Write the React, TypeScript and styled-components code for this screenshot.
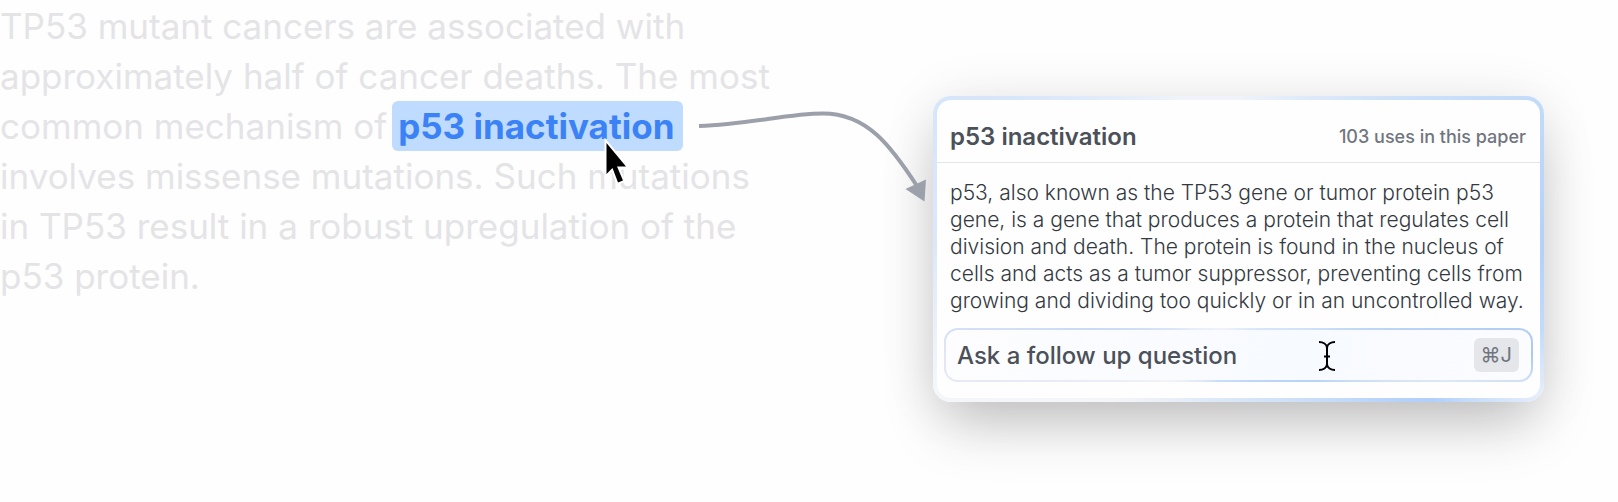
import React from "react";
import styled, { createGlobalStyle } from "styled-components";

const GlobalStyle = createGlobalStyle`
  *, *::before, *::after { box-sizing: border-box; }
  body {
    margin: 0;
    background: #fefefe;
    font-family: Inter, "Liberation Sans", sans-serif;
  }
`;

const Page = styled.main`
  display: grid;
  grid-template-columns: minmax(0, 784fr) minmax(0, 611fr);
  column-gap: 149px;
  align-items: start;
  padding-right: 74px;
  min-height: 100vh;
`;

const Excerpt = styled.p`
  margin: 0;
  padding-top: 1px;
  font-size: 35px;
  line-height: 50px;
  font-weight: 400;
  color: #e4e4e7;
`;

const Term = styled.mark`
  position: relative;
  display: inline-block;
  margin: 0 -5px;
  padding: 0 9px 0 6px;
  border-radius: 6px;
  background: #bfdbfe;
  color: #3b82f6;
  font-weight: 700;
`;

const Connector = styled.svg`
  position: absolute;
  left: calc(100% + 16px);
  top: 3px;
  overflow: visible;
  pointer-events: none;
`;

const Pointer = styled.svg`
  position: absolute;
  right: 56px;
  top: 38px;
  overflow: visible;
  pointer-events: none;
`;

const Card = styled.section`
  margin: 96px 0;
  border: 4px solid transparent;
  border-radius: 18px;
  background:
    linear-gradient(#fefefe, #fefefe) padding-box,
    conic-gradient(from 0deg, #f0f4fa 0deg, #c8defa 55deg, #b3d1f9 90deg, #c3dbfb 105deg, #e6eefa 116deg, #b0cffb 128deg, #c8dcf8 150deg, #dde9f8 190deg, #f4f5f7 220deg, #f4f6fa 245deg, #dce8fa 270deg, #d6e5fa 300deg, #f0f4fa 340deg, #f0f4fa 360deg) border-box;
  box-shadow: 0 30px 60px -10px rgba(0, 0, 0, 0.22), 0 4px 56px rgba(0, 0, 0, 0.09);
  color: #4b5059;
`;

const CardHeader = styled.header`
  display: flex;
  align-items: center;
  justify-content: space-between;
  height: 63px;
  padding: 11px 14px 0 13px;
  border-bottom: 1px solid #e4e5e8;
`;

const Title = styled.h2`
  margin: 0;
  font-size: 24px;
  line-height: 32px;
  font-weight: 600;
`;

const UseCount = styled.span`
  font-size: 18px;
  line-height: 32px;
  font-weight: 500;
  color: #71757e;
`;

const Definition = styled.p`
  margin: 0;
  padding: 16px 13px 14px;
  font-size: 21px;
  line-height: 27px;
  font-weight: 300;
  color: #343941;
`;

const Ask = styled.form`
  position: relative;
  display: flex;
  align-items: center;
  height: 54px;
  margin: 0 7px 16px;
  padding: 0 12px 0 11px;
  border: 2px solid transparent;
  border-radius: 14px;
  background:
    linear-gradient(100deg, #fdfdff, #f7faff 60%, #fbfcff) padding-box,
    conic-gradient(#e3ecf9 0deg, #d0e1f9 70deg, #a9c8f4 90deg, #dde8f8 97deg, #b9d3f7 108deg, #c0d8f9 170deg, #cadef9 220deg, #f2f3f8 250deg, #e2e6f5 270deg, #c9daf6 280deg, #e8eef8 300deg, #f0f3f9 330deg, #e3ecf9 360deg) border-box;
`;

const AskInput = styled.input`
  flex: 1;
  min-width: 0;
  padding: 1px 0 0;
  border: 0;
  outline: 0;
  background: transparent;
  font: inherit;
  font-size: 24px;
  line-height: 32px;
  font-weight: 500;
  color: #4b5059;

  &::placeholder {
    color: #4b5059;
    opacity: 1;
  }
`;

const Shortcut = styled.kbd`
  padding: 0 7px;
  border-radius: 6px;
  background: #e4e6ea;
  font-family: inherit;
  font-size: 20px;
  line-height: 34px;
  color: #71757e;
`;

const Caret = styled.svg`
  position: absolute;
  right: 195px;
  top: 11px;
  pointer-events: none;
`;

export default function App() {
  return (
    <>
      <GlobalStyle />
      <Page>
        <Excerpt>
          TP53 mutant cancers are associated with approximately half of cancer deaths. The most
          common mechanism of{" "}
          <Term>
            p53 inactivation
            <Connector width="228" height="98" viewBox="700 104 228 98" aria-hidden="true">
              <path
                d="M700 126C750 124.500 788 113.500 824 113.500C868 113.500 892 146 918 186"
                fill="none"
                stroke="#9ca0ab"
                strokeWidth="4"
              />
              <path d="M906.500 189L927 179.500L925.500 201.500Z" fill="#9ca0ab" />
            </Connector>
            <Pointer width="22" height="46" viewBox="0 0 22 46" aria-hidden="true">
              <path
                d="M1.500 4V35L7.500 29L13 43.500L18 41.500L12 27.500H21Z"
                fill="#000"
                stroke="#fff"
                strokeWidth="4"
                paintOrder="stroke"
              />
            </Pointer>
          </Term>{" "}
          involves missense mutations. Such mutations in TP53 result in a robust upregulation of
          the p53 protein.
        </Excerpt>
        <Card>
          <CardHeader>
            <Title>p53 inactivation</Title>
            <UseCount>103 uses in this paper</UseCount>
          </CardHeader>
          <Definition>
            p53, also known as the TP53 gene or tumor protein p53 gene, is a gene that produces a
            protein that regulates cell division and death. The protein is found in the nucleus of
            cells and acts as a tumor suppressor, preventing cells from growing and dividing too
            quickly or in an uncontrolled way.
          </Definition>
          <Ask onSubmit={(event) => event.preventDefault()}>
            <AskInput
              type="text"
              aria-label="Ask a follow up question"
              placeholder="Ask a follow up question"
            />
            <Shortcut>⌘J</Shortcut>
            <Caret width="18" height="30" viewBox="0 0 18 30" aria-hidden="true">
              <path
                d="M1 1C5 1 9 3 9 7V23C9 27 5 29 1 29M17 1C13 1 9 3 9 7M17 29C13 29 9 27 9 23M6 15.500H12"
                fill="none"
                stroke="#000"
                strokeWidth="2"
              />
            </Caret>
          </Ask>
        </Card>
      </Page>
    </>
  );
}
